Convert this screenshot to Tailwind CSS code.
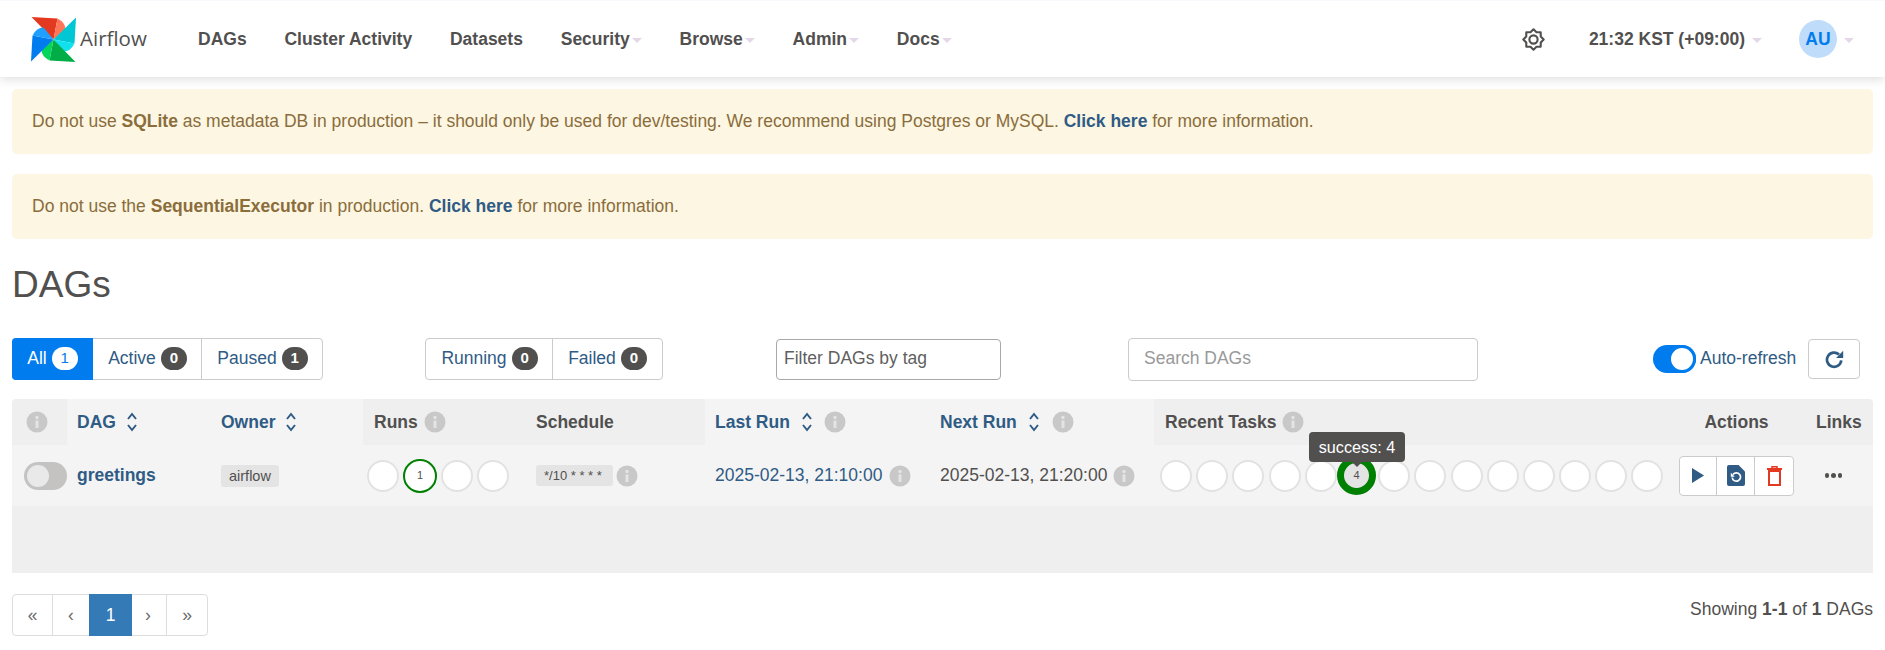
<!DOCTYPE html>
<html lang="en">
<head>
    <meta charset="UTF-8">
    <title>DAGs - Airflow</title>
    <script src="https://cdn.jsdelivr.net/npm/@tailwindcss/browser@4"></script>
</head>
<body class="bg-white font-['Liberation_Sans',Arial,sans-serif] text-[17.5px] text-[#51504f] overflow-hidden h-[650px]">
    <header class="h-[77px] border-t border-[#f8f8fd] bg-white shadow-[0_2px_10px_rgba(0,0,0,0.14)] flex items-center">
        <a class="w-[198px] pl-[31px] flex items-center gap-[4px] text-[20.5px] font-['Open_Sans',sans-serif] text-[#51504f]">
            <svg width="45" height="45" viewBox="-22.5 -22.5 45 45" class="shrink-0">
                <g>
                    <path d="M-22 -22.5 L4 -21 L0 0 Z" fill="#e43921"/>
                    <path d="M4 -21 Q12 -17 12 -10 L0 0 Z" fill="#ff7557"/>
                </g>
                <g>
                    <path d="M22.500 -22 L21 4 L0 0 Z" fill="#00c7d4"/>
                    <path d="M21 4 Q17 12 10 12 L0 0 Z" fill="#11e1ee"/>
                </g>
                <g>
                    <path d="M22 22.500 L-4 21 L0 0 Z" fill="#00ad46"/>
                    <path d="M-4 21 Q-12 17 -12 10 L0 0 Z" fill="#04d659"/>
                </g>
                <g>
                    <path d="M-22.500 22 L-21 -4 L0 0 Z" fill="#017cee"/>
                    <path d="M-21 -4 Q-17 -12 -10 -12 L0 0 Z" fill="#1fa0ff"/>
                </g>
            </svg>
            <span class="pb-[2px]">Airflow</span>
        </a>
        <nav class="flex items-center gap-[37.800px] font-bold">
            <a>DAGs</a>
            <a>Cluster Activity</a>
            <a>Datasets</a>
            <a class="flex items-center">Security<span class="ml-[2px] mt-[2px] border-x-[5px] border-t-[5px] border-x-transparent border-t-[#e4d8e8]"></span></a>
            <a class="flex items-center">Browse<span class="ml-[2px] mt-[2px] border-x-[5px] border-t-[5px] border-x-transparent border-t-[#e4d8e8]"></span></a>
            <a class="flex items-center">Admin<span class="ml-[2px] mt-[2px] border-x-[5px] border-t-[5px] border-x-transparent border-t-[#e4d8e8]"></span></a>
            <a class="flex items-center">Docs<span class="ml-[2px] mt-[2px] border-x-[5px] border-t-[5px] border-x-transparent border-t-[#e4d8e8]"></span></a>
        </nav>
        <div class="ml-auto flex items-center font-bold pr-[31px]">
            <svg width="23" height="23" viewBox="0 0 24 24" fill="none" stroke="#51504f" stroke-width="2.200" stroke-linejoin="round" class="mr-[44px]">
                <path d="M12 1.400L15.140 4.420L19.500 4.500L19.580 8.860L22.600 12L19.580 15.140L19.500 19.500L15.140 19.580L12 22.600L8.860 19.580L4.500 19.500L4.420 15.140L1.400 12L4.420 8.860L4.500 4.500L8.860 4.420Z"/>
                <circle cx="12" cy="12" r="4.300"/>
            </svg>
            <span>21:32 KST (+09:00)</span>
            <span class="ml-[7px] mt-[2px] border-x-[5px] border-t-[5px] border-x-transparent border-t-[#e4d8e8]"></span>
            <span class="ml-[37px] w-[38px] h-[38px] rounded-full bg-[#bfdcfb] text-[#017cee] flex items-center justify-center">AU</span>
            <span class="ml-[7px] mt-[2px] border-x-[5px] border-t-[5px] border-x-transparent border-t-[#e4d8e8]"></span>
        </div>
    </header>

    <main class="px-[12px]">
        <div class="mt-[12px] h-[65px] rounded-[5px] bg-[#fdf6e3] text-[#8a6d3b] px-[20px] flex items-center">
            <p>Do not use <b>SQLite</b> as metadata DB in production – it should only be used for dev/testing. We recommend using Postgres or MySQL. <a class="font-bold text-[#2f5b85]">Click here</a> for more information.</p>
        </div>
        <div class="mt-[20px] h-[65px] rounded-[5px] bg-[#fdf6e3] text-[#8a6d3b] px-[20px] flex items-center">
            <p>Do not use the <b>SequentialExecutor</b> in production. <a class="font-bold text-[#2f5b85]">Click here</a> for more information.</p>
        </div>

        <h2 class="mt-[26px] text-[37px] leading-[40px]">DAGs</h2>

        <div class="mt-[33px] h-[42px] flex items-center">
            <div class="flex h-[42px] w-[311px] border border-[#cbcbcb] rounded-[4px] text-[#2f5b85]">
                <a class="w-[81px] -my-px -ml-px pb-px rounded-l-[4px] bg-[#017cee] text-white flex items-center justify-center gap-[5px]">All <span class="w-[26px] h-[23px] rounded-full bg-white text-[#017cee] text-[15px] flex items-center justify-center">1</span></a>
                <a class="w-[109px] pb-px pl-px border-r border-[#cbcbcb] flex items-center justify-center gap-[5px]">Active <span class="w-[26px] h-[23px] rounded-full bg-[#51504f] text-white text-[15px] font-bold flex items-center justify-center">0</span></a>
                <a class="flex-1 pb-px pl-px flex items-center justify-center gap-[5px]">Paused <span class="w-[26px] h-[23px] rounded-full bg-[#51504f] text-white text-[15px] font-bold flex items-center justify-center">1</span></a>
            </div>
            <div class="ml-[102px] flex h-[42px] w-[238px] border border-[#cbcbcb] rounded-[4px] text-[#2f5b85]">
                <a class="w-[127px] pb-px pl-px border-r border-[#cbcbcb] flex items-center justify-center gap-[5px]">Running <span class="w-[26px] h-[23px] rounded-full bg-[#51504f] text-white text-[15px] font-bold flex items-center justify-center">0</span></a>
                <a class="flex-1 pb-px flex items-center justify-center gap-[5px]">Failed <span class="w-[26px] h-[23px] rounded-full bg-[#51504f] text-white text-[15px] font-bold flex items-center justify-center">0</span></a>
            </div>
            <div class="ml-[113px] w-[225px] h-[41px] pb-px border border-[#a8a8a8] rounded-[4px] px-[7px] flex items-center text-[#5f5f5f]">Filter DAGs by tag</div>
            <div class="ml-[127px] w-[350px] h-[43px] pb-px border border-[#cbcbcb] rounded-[4px] px-[15px] flex items-center text-[#999]">Search DAGs</div>
            <div class="ml-[175px] w-[43px] h-[28px] rounded-full bg-[#017cee] relative shrink-0">
                <span class="absolute right-0 top-0 w-[28px] h-[28px] rounded-full bg-white border-[3px] border-[#017cee]"></span>
            </div>
            <span class="ml-[4px] pb-[2px] text-[#2f5b85]">Auto-refresh</span>
            <div class="ml-[12px] w-[52px] h-[40px] border border-[#cbcbcb] rounded-[4px] flex items-center justify-center shrink-0">
                <svg width="19" height="19" viewBox="0 0 24 24" fill="none" stroke="#2f5b85" stroke-width="3.400">
                    <path d="M20.500 13a9 9 0 1 1-2.800-7.300"/>
                    <path d="M23 1v9h-9z" fill="#2f5b85" stroke="none"/>
                </svg>
            </div>
        </div>

        <div class="mt-[19px] rounded-t-[4px] overflow-hidden">
            <div class="h-[46px] grid grid-cols-[55px_143px_153px_162px_180px_224px_225px_514px_137px_68px] font-bold items-stretch">
                <div class="bg-[#efefef] flex items-center pl-[14px]">
                    <svg width="22" height="22" viewBox="0 0 22 22"><circle cx="11" cy="11" r="10.500" fill="#c8c8c8"/><rect x="9.500" y="9.500" width="3" height="7.500" fill="#e4e4e4"/><circle cx="11" cy="6.500" r="1.700" fill="#e4e4e4"/></svg>
                </div>
                <div class="bg-[#f4f4f4] flex items-center pl-[10px] text-[#2f5b85]">DAG
                    <svg width="12" height="20" viewBox="0 0 12 20" fill="none" stroke="#2f5b85" stroke-width="2" class="ml-[10px]"><path d="M2 7l4-5 4 5M2 13l4 5 4-5"/></svg>
                </div>
                <div class="bg-[#f4f4f4] flex items-center pl-[11px] text-[#2f5b85]">Owner
                    <svg width="12" height="20" viewBox="0 0 12 20" fill="none" stroke="#2f5b85" stroke-width="2" class="ml-[10px]"><path d="M2 7l4-5 4 5M2 13l4 5 4-5"/></svg>
                </div>
                <div class="bg-[#efefef] flex items-center pl-[11px]">Runs
                    <svg width="22" height="22" viewBox="0 0 22 22" class="ml-[6px]"><circle cx="11" cy="11" r="10.500" fill="#c8c8c8"/><rect x="9.500" y="9.500" width="3" height="7.500" fill="#e4e4e4"/><circle cx="11" cy="6.500" r="1.700" fill="#e4e4e4"/></svg>
                </div>
                <div class="bg-[#efefef] flex items-center pl-[11px]">Schedule</div>
                <div class="bg-[#f4f4f4] flex items-center pl-[10px] text-[#2f5b85]">Last Run
                    <svg width="12" height="20" viewBox="0 0 12 20" fill="none" stroke="#2f5b85" stroke-width="2" class="ml-[11px]"><path d="M2 7l4-5 4 5M2 13l4 5 4-5"/></svg>
                    <svg width="22" height="22" viewBox="0 0 22 22" class="ml-[11px]"><circle cx="11" cy="11" r="10.500" fill="#c8c8c8"/><rect x="9.500" y="9.500" width="3" height="7.500" fill="#e4e4e4"/><circle cx="11" cy="6.500" r="1.700" fill="#e4e4e4"/></svg>
                </div>
                <div class="bg-[#f4f4f4] flex items-center pl-[11px] text-[#2f5b85]">Next Run
                    <svg width="12" height="20" viewBox="0 0 12 20" fill="none" stroke="#2f5b85" stroke-width="2" class="ml-[11px]"><path d="M2 7l4-5 4 5M2 13l4 5 4-5"/></svg>
                    <svg width="22" height="22" viewBox="0 0 22 22" class="ml-[12px]"><circle cx="11" cy="11" r="10.500" fill="#c8c8c8"/><rect x="9.500" y="9.500" width="3" height="7.500" fill="#e4e4e4"/><circle cx="11" cy="6.500" r="1.700" fill="#e4e4e4"/></svg>
                </div>
                <div class="bg-[#efefef] flex items-center pl-[11px]">Recent Tasks
                    <svg width="22" height="22" viewBox="0 0 22 22" class="ml-[5px]"><circle cx="11" cy="11" r="10.500" fill="#c8c8c8"/><rect x="9.500" y="9.500" width="3" height="7.500" fill="#e4e4e4"/><circle cx="11" cy="6.500" r="1.700" fill="#e4e4e4"/></svg>
                </div>
                <div class="bg-[#efefef] flex items-center justify-center">Actions</div>
                <div class="bg-[#efefef] flex items-center pl-[11px]">Links</div>
            </div>
            <div class="h-[61px] bg-[#f4f4f4] grid grid-cols-[55px_143px_153px_162px_180px_224px_225px_514px_137px_68px] items-center">
                <div class="pl-[12px]">
                    <div class="w-[43px] h-[28px] rounded-full bg-[#c4c3c2] relative"><span class="absolute left-[3px] top-[3px] w-[22px] h-[22px] rounded-full bg-[#e9e9e9]"></span></div>
                </div>
                <a class="pl-[10px] font-bold text-[#2f5b85]">greetings</a>
                <div class="pl-[11px]"><span class="inline-block h-[22px] leading-[22px] px-[8px] rounded-[3px] bg-[#e4e4e4] text-[14.500px]">airflow</span></div>
                <div class="pl-[4px] flex items-center gap-[4px]">
                    <span class="w-[32px] h-[32px] rounded-full bg-white border-2 border-[#e2e2e2]"></span>
                    <span class="w-[34px] h-[34px] rounded-full bg-white border-[2.500px] border-[#008000] flex items-center justify-center text-[11px]">1</span>
                    <span class="w-[32px] h-[32px] rounded-full bg-white border-2 border-[#e2e2e2]"></span>
                    <span class="w-[32px] h-[32px] rounded-full bg-white border-2 border-[#e2e2e2]"></span>
                </div>
                <div class="pl-[11px] flex items-center gap-[3px]">
                    <span class="h-[21px] leading-[21px] w-[77px] pl-[8px] rounded-[3px] bg-[#e4e4e4] text-[13px]">*/10 * * * *</span>
                    <svg width="22" height="22" viewBox="0 0 22 22"><circle cx="11" cy="11" r="10.500" fill="#c8c8c8"/><rect x="9.500" y="9.500" width="3" height="7.500" fill="#e4e4e4"/><circle cx="11" cy="6.500" r="1.700" fill="#e4e4e4"/></svg>
                </div>
                <div class="pl-[10px] flex items-center gap-[7px] text-[#2f5b85]">2025-02-13, 21:10:00
                    <svg width="22" height="22" viewBox="0 0 22 22"><circle cx="11" cy="11" r="10.500" fill="#c8c8c8"/><rect x="9.500" y="9.500" width="3" height="7.500" fill="#e4e4e4"/><circle cx="11" cy="6.500" r="1.700" fill="#e4e4e4"/></svg>
                </div>
                <div class="pl-[11px] flex items-center gap-[6px]">2025-02-13, 21:20:00
                    <svg width="22" height="22" viewBox="0 0 22 22"><circle cx="11" cy="11" r="10.500" fill="#c8c8c8"/><rect x="9.500" y="9.500" width="3" height="7.500" fill="#e4e4e4"/><circle cx="11" cy="6.500" r="1.700" fill="#e4e4e4"/></svg>
                </div>
                <div class="pl-[6px] flex items-center gap-[4.200px]">
                    <span class="w-[32px] h-[32px] rounded-full bg-white border-2 border-[#e2e2e2]"></span>
                    <span class="w-[32px] h-[32px] rounded-full bg-white border-2 border-[#e2e2e2]"></span>
                    <span class="w-[32px] h-[32px] rounded-full bg-white border-2 border-[#e2e2e2]"></span>
                    <span class="w-[32px] h-[32px] rounded-full bg-white border-2 border-[#e2e2e2]"></span>
                    <span class="w-[32px] h-[32px] rounded-full bg-white border-2 border-[#e2e2e2]"></span>
                    <span class="w-[39px] h-[39px] -ml-[4px] -mr-[2px] rounded-full bg-[#e4e4e4] border-[7px] border-[#008000] flex items-center justify-center text-[11px]">4</span>
                    <span class="w-[32px] h-[32px] rounded-full bg-white border-2 border-[#e2e2e2]"></span>
                    <span class="w-[32px] h-[32px] rounded-full bg-white border-2 border-[#e2e2e2]"></span>
                    <span class="w-[32px] h-[32px] rounded-full bg-white border-2 border-[#e2e2e2]"></span>
                    <span class="w-[32px] h-[32px] rounded-full bg-white border-2 border-[#e2e2e2]"></span>
                    <span class="w-[32px] h-[32px] rounded-full bg-white border-2 border-[#e2e2e2]"></span>
                    <span class="w-[32px] h-[32px] rounded-full bg-white border-2 border-[#e2e2e2]"></span>
                    <span class="w-[32px] h-[32px] rounded-full bg-white border-2 border-[#e2e2e2]"></span>
                    <span class="w-[32px] h-[32px] rounded-full bg-white border-2 border-[#e2e2e2]"></span>
                </div>
                <div class="pl-[11px]">
                    <div class="w-[115px] h-[40px] bg-white border border-[#cbcbcb] rounded-[4px] flex">
                        <span class="w-[37px] border-r border-[#cbcbcb] flex items-center justify-center">
                            <svg width="12" height="15" viewBox="0 0 12 15"><path d="M0 0L12 7.500L0 15Z" fill="#2f5b85"/></svg>
                        </span>
                        <span class="w-[38px] border-r border-[#cbcbcb] flex items-center justify-center">
                            <svg width="18" height="21" viewBox="0 0 18 21"><path d="M2 0H11.500L18 6.500V19a2 2 0 0 1-2 2H2a2 2 0 0 1-2-2V2a2 2 0 0 1 2-2Z" fill="#2f5b85"/><path d="M6 9.500a4.200 4.200 0 1 1-.8 3" fill="none" stroke="#fff" stroke-width="1.700"/><path d="M3.800 7.800v4h4z" fill="#fff"/></svg>
                        </span>
                        <span class="flex-1 flex items-center justify-center">
                            <svg width="15" height="20" viewBox="0 0 15 20" fill="none" stroke="#e43921" stroke-width="2"><path d="M0 3H15"/><path d="M5 2.500V.8H10V2.500" stroke-width="1.500"/><rect x="2" y="5" width="11" height="14"/></svg>
                        </span>
                    </div>
                </div>
                <div class="flex justify-center gap-[2px] pr-[11px]">
                    <span class="w-[4.500px] h-[4.500px] rounded-full bg-[#51504f]"></span>
                    <span class="w-[4.500px] h-[4.500px] rounded-full bg-[#51504f]"></span>
                    <span class="w-[4.500px] h-[4.500px] rounded-full bg-[#51504f]"></span>
                </div>
            </div>
            <div class="h-[67px] bg-[#efefef]"></div>
        </div>

        <div class="mt-[21px] flex items-center justify-between">
            <div class="flex h-[42px] w-[196px] border border-[#dddddd] rounded-[4px] text-[#6b6b6b]">
                <a class="w-[40px] border-r border-[#dddddd] flex items-center justify-center">«</a>
                <a class="w-[36px] flex items-center justify-center">‹</a>
                <a class="w-[43px] -my-px bg-[#337ab7] text-white flex items-center justify-center">1</a>
                <a class="w-[35px] pr-[2px] border-r border-[#dddddd] flex items-center justify-center">›</a>
                <a class="flex-1 flex items-center justify-center">»</a>
            </div>
            <p class="-mt-[12px]">Showing <b>1-1</b> of <b>1</b> DAGs</p>
        </div>
    </main>

    <div class="absolute left-[1309px] top-[432px] w-[96px] h-[30px] rounded-[4px] bg-[#51504f] text-white flex items-center justify-center text-[16.200px]">success: 4
        <span class="absolute left-1/2 -ml-[5px] top-full border-x-[5px] border-t-[5px] border-x-transparent border-t-[#51504f]"></span>
    </div>
</body>
</html>
